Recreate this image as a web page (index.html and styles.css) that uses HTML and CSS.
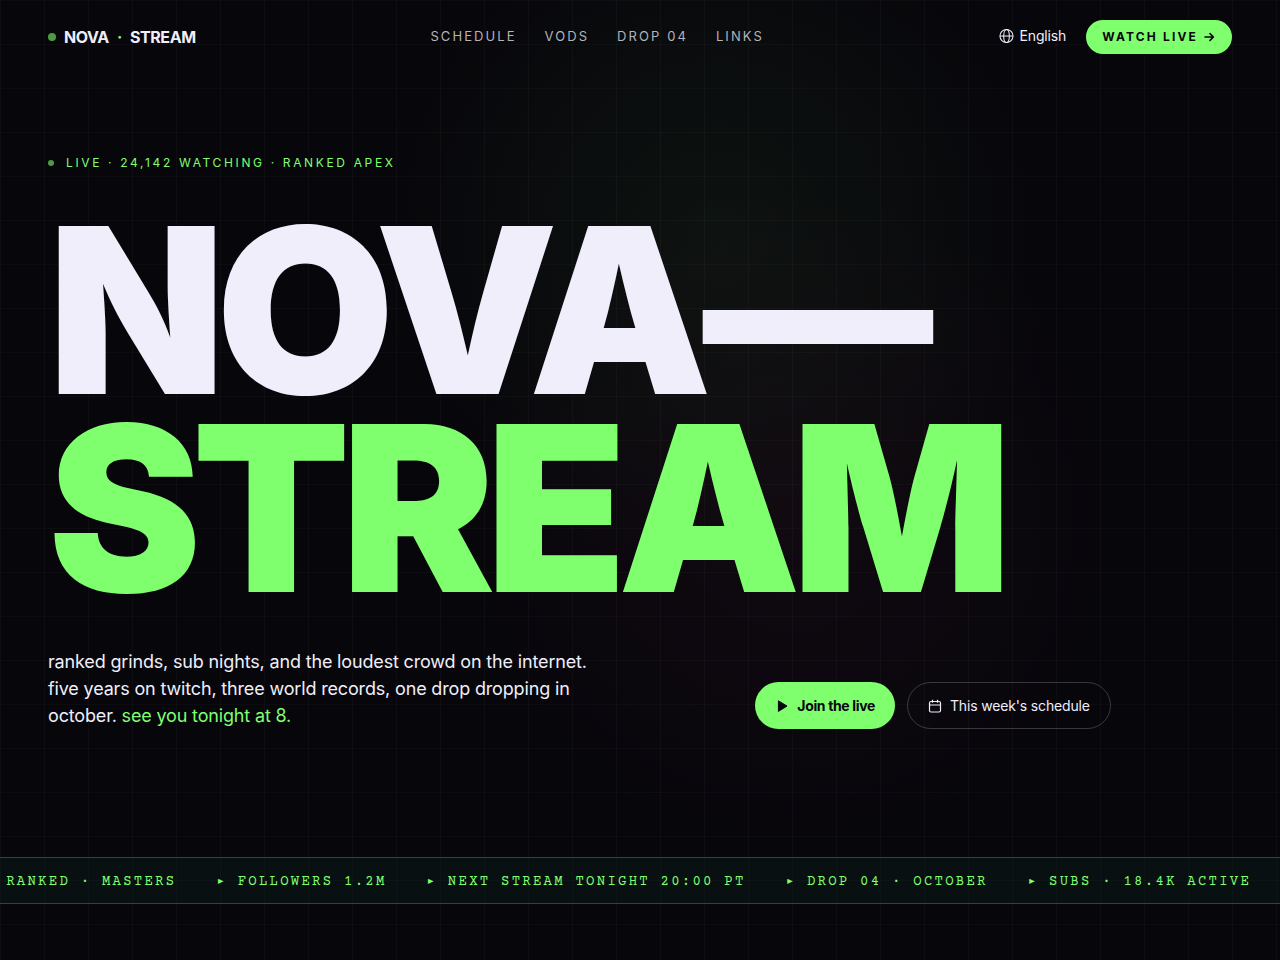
FILE: index.html
```html
<!DOCTYPE html>
<html lang="en">
<head>
  <meta charset="UTF-8" />
  <meta name="viewport" content="width=device-width, initial-scale=1.0" />
  <title>NOVA · STREAM</title>
  <link rel="stylesheet" href="styles.css">
</head>
<body>
  <header class="site-header">
    <a class="brand" href="#">
      <span class="live-dot"></span>
      <span>NOVA</span>
      <span class="accent">·</span>
      <span>STREAM</span>
    </a>
    <nav class="site-nav">
      <a href="#schedule">SCHEDULE</a>
      <a href="#vods">VODS</a>
      <a href="#drop">DROP 04</a>
      <a href="#links">LINKS</a>
    </nav>
    <div class="header-actions">
      <button type="button" class="lang-btn">
        <svg width="15" height="15" viewBox="0 0 16 16" fill="none" stroke="currentColor" stroke-width="1.1">
          <circle cx="8" cy="7.5" r="7" />
          <ellipse cx="8" cy="7.5" rx="3" ry="7" />
          <path d="M1 7.5h14" />
        </svg>
        English
      </button>
      <a class="watch-btn" href="#live">
        WATCH LIVE
        <svg width="12" height="12" viewBox="0 0 12 12" fill="none" stroke="currentColor" stroke-width="1.6" stroke-linecap="round" stroke-linejoin="round">
          <path d="M1 6h8.4M6 2.6L9.4 6 6 9.4" />
        </svg>
      </a>
    </div>
  </header>

  <main class="hero">
    <p class="eyebrow"><span class="live-dot small"></span>LIVE · 24,142 WATCHING · RANKED APEX</p>
    <h1 class="title">NOVA—<br><span class="accent">STREAM</span></h1>
    <div class="hero-bottom">
      <p class="intro">
        ranked grinds, sub nights, and the loudest crowd on the internet.
        five years on twitch, three world records, one drop dropping in
        october. <span class="accent">see you tonight at 8.</span>
      </p>
      <div class="cta">
        <a class="btn btn-primary" href="#live">
          <svg width="14" height="14" viewBox="0 0 14 14" fill="currentColor" stroke="currentColor" stroke-linejoin="round">
            <path d="M3.4 1.8v10.6L12 7.1z" />
          </svg>
          Join the live
        </a>
        <a class="btn btn-ghost" href="#schedule">
          <svg width="14" height="14" viewBox="0 0 14 14" fill="none" stroke="currentColor" stroke-width="1.2">
            <rect x="1.5" y="2.5" width="11" height="10.5" rx="1.5" />
            <path d="M1.5 6h11M4.5 0.8v3M9.5 0.8v3" />
          </svg>
          This week's schedule
        </a>
      </div>
    </div>
  </main>

  <div class="ticker">
    <div class="ticker-track">
      <span>▸ RANKED · MASTERS</span>
      <span>▸ FOLLOWERS 1.2M</span>
      <span>▸ NEXT STREAM TONIGHT 20:00 PT</span>
      <span>▸ DROP 04 · OCTOBER</span>
      <span>▸ SUBS · 18.4K ACTIVE</span>
    </div>
  </div>
</body>
</html>
```
FILE: styles.css
```css
:root {
  --bg: #07060b;
  --text: #efeefa;
  --accent: #7fff6e;
}

* {
  box-sizing: border-box;
}

body {
  margin: 0;
  min-height: 100vh;
  overflow-x: hidden;
  font-family: "Inter", sans-serif;
  letter-spacing: -0.01em;
  color: var(--text);
  background-color: var(--bg);
  background-image:
    linear-gradient(rgba(255, 255, 255, 0.025) 1px, transparent 1px),
    linear-gradient(90deg, rgba(255, 255, 255, 0.025) 1px, transparent 1px),
    radial-gradient(circle at 56% 24%, rgba(127, 255, 110, 0.05), transparent 350px),
    radial-gradient(circle at 62% 54%, rgba(255, 90, 160, 0.04), transparent 340px);
  background-size: 44px 44px, 44px 44px, auto, auto;
}

a {
  color: inherit;
  text-decoration: none;
}

svg {
  flex: none;
}

.accent {
  color: var(--accent);
}

.live-dot {
  width: 8px;
  height: 8px;
  border-radius: 50%;
  background: var(--accent);
  opacity: 0.6;
}

.live-dot.small {
  width: 6px;
  height: 6px;
}

/* Header */
.site-header {
  display: flex;
  align-items: center;
  justify-content: space-between;
  padding: 20px 48px;
}

.brand {
  display: flex;
  align-items: center;
  gap: 8px;
  font-size: 16px;
  font-weight: 700;
  letter-spacing: -0.025em;
}

.site-nav {
  display: flex;
  gap: 28px;
  padding-bottom: 2px;
  font-size: 13px;
  line-height: 18px;
  letter-spacing: 0.16em;
  color: #b4b3ba;
}

.header-actions {
  display: flex;
  align-items: center;
  gap: 20px;
}

.lang-btn {
  display: flex;
  align-items: center;
  gap: 6px;
  padding: 0 0 2px;
  border: none;
  background: none;
  color: inherit;
  font: inherit;
  font-size: 14px;
  line-height: 18px;
  letter-spacing: inherit;
  cursor: pointer;
}

.watch-btn {
  display: flex;
  align-items: center;
  gap: 6px;
  padding: 8px 16px;
  border-radius: 999px;
  background: var(--accent);
  color: var(--bg);
  font-size: 12px;
  line-height: 18px;
  font-weight: 700;
  letter-spacing: 0.18em;
}

/* Hero */
.hero {
  padding: 80px 48px 128px;
}

.eyebrow {
  display: flex;
  align-items: center;
  gap: 12px;
  margin: 0 0 40px;
  font-size: 12px;
  line-height: 18px;
  letter-spacing: 0.22em;
  color: var(--accent);
}

.title {
  margin: 0;
  font-size: 18vw;
  font-weight: 900;
  line-height: 0.86;
  letter-spacing: -0.04em;
}

.hero-bottom {
  display: grid;
  grid-template-columns: 1.4fr 1fr;
  gap: 40px;
  align-items: end;
  margin-top: 40px;
}

.intro {
  margin: 0;
  max-width: 560px;
  font-size: 18px;
  line-height: 27px;
}

.cta {
  display: flex;
  flex-wrap: wrap;
  gap: 12px;
}

.btn {
  display: flex;
  align-items: center;
  gap: 8px;
  padding: 14px 20px;
  border-radius: 999px;
  font-size: 14px;
  line-height: 17px;
}

.btn-primary {
  background: var(--accent);
  color: var(--bg);
  font-weight: 700;
  letter-spacing: -0.025em;
}

.btn-ghost {
  border: 1px solid rgba(255, 255, 255, 0.2);
}

/* Ticker */
.ticker {
  display: flex;
  justify-content: center;
  overflow: hidden;
  padding: 16px 0 12px;
  border-top: 1px solid rgba(127, 255, 110, 0.25);
  border-bottom: 1px solid rgba(127, 255, 110, 0.25);
  background: rgba(20, 60, 45, 0.2);
}

.ticker-track {
  display: flex;
  flex: none;
  gap: 40px;
  padding-right: 44px;
  font-family: "Courier Prime", "Liberation Mono", monospace;
  font-size: 14px;
  line-height: 17px;
  letter-spacing: 0.16em;
  white-space: nowrap;
  color: var(--accent);
}
```
